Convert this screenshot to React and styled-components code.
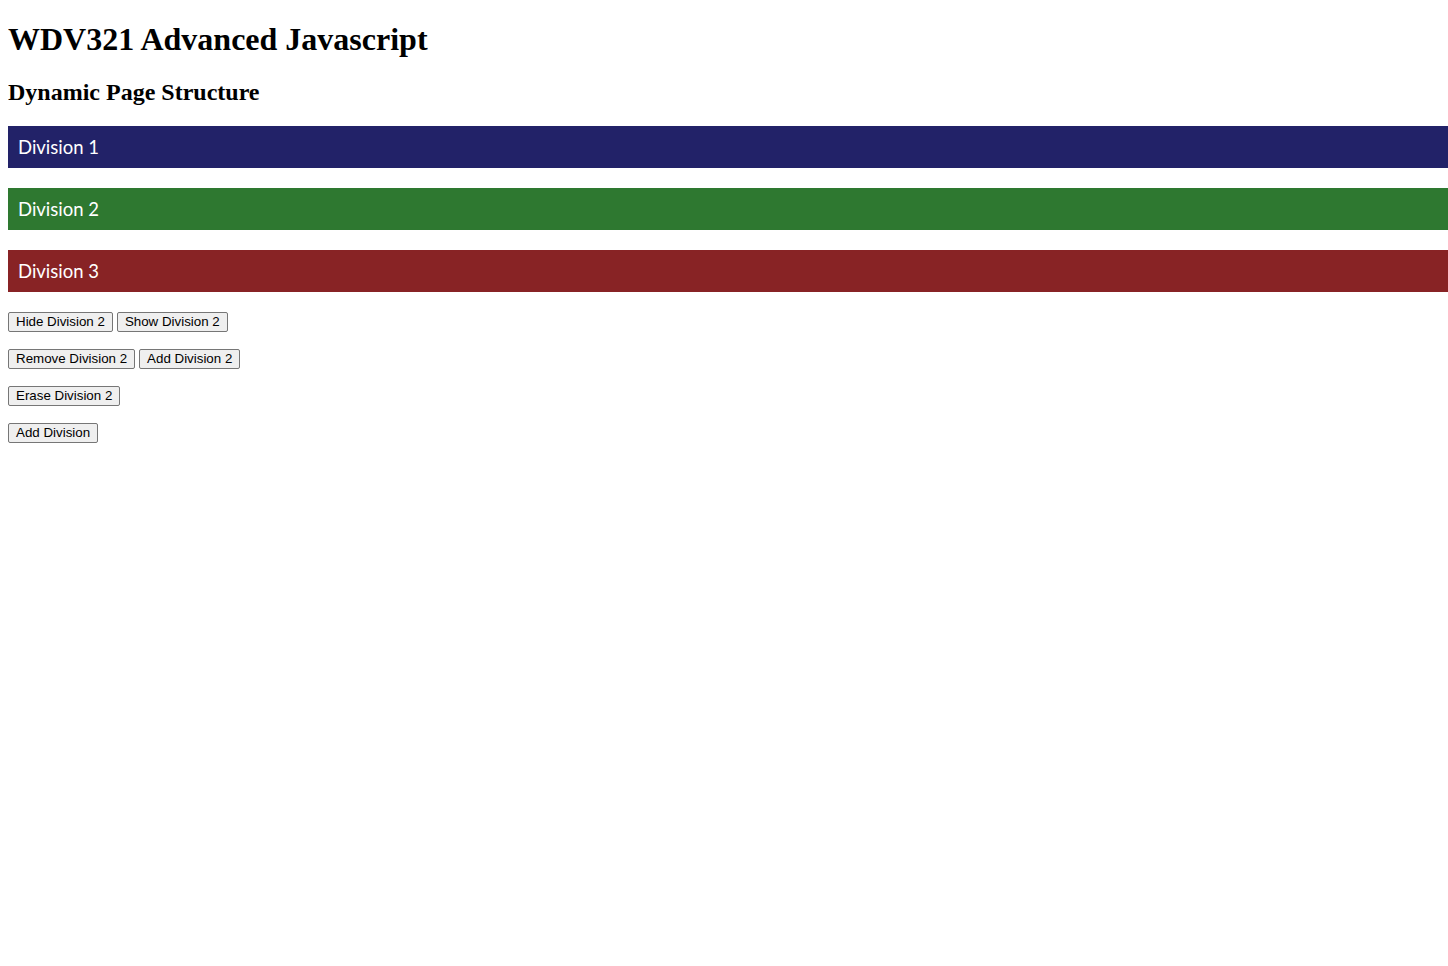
import React, { useState } from "react";
import styled, { createGlobalStyle } from "styled-components";

const GlobalStyle = createGlobalStyle`
  body {
    margin: 8px 0 8px 8px;
    background: #fff;
    color: #000;
    font-family: "Liberation Serif", "Times New Roman", serif;
  }
`;

const Title = styled.h1`
  font-family: "Liberation Serif", "Times New Roman", serif;
  font-size: 32px;
  font-weight: 700;
  margin: 12.5px 0 21.44px;
`;

const Subtitle = styled.h2`
  font-family: "Liberation Serif", "Times New Roman", serif;
  font-size: 24px;
  font-weight: 700;
  margin: 19.92px 0;
`;

const Division = styled.div`
  box-sizing: border-box;
  height: 42px;
  margin: 0 0 20px 0;
  padding: 0 10px;
  display: flex;
  align-items: center;
  background: ${(props) => props.$color};
  color: #fff;
  font-family: Lato, "Open Sans", sans-serif;
  font-size: 18.5px;
`;

const ButtonRow = styled.p`
  margin: 16px 0;
  height: 21px;
  display: flex;
  align-items: flex-start;
  gap: 4px;
  font-family: "Liberation Sans", Arial, sans-serif;
`;

const Button = styled.button`
  box-sizing: border-box;
  height: 20px;
  font-family: "Liberation Sans", Arial, sans-serif;
  font-size: 13.33px;
  padding: 0 7px;
  margin: 0;
  border: 1px solid #767676;
  border-radius: 2px;
  background: #efefef;
  color: #000;
  cursor: pointer;
  &:hover {
    background: #e5e5e5;
  }
`;

const COLORS = ["#222268", "#2e7830", "#882325", "#555555"];

export default function App() {
  const [divs, setDivs] = useState([
    { id: 1, text: "Division 1", color: COLORS[0], hidden: false },
    { id: 2, text: "Division 2", color: COLORS[1], hidden: false },
    { id: 3, text: "Division 3", color: COLORS[2], hidden: false },
  ]);

  const update = (id, patch) =>
    setDivs((prev) => prev.map((d) => (d.id === id ? { ...d, ...patch } : d)));

  const addDivision2 = () => {
    if (divs.some((d) => d.id === 2)) return;
    const next = [...divs];
    next.splice(1, 0, { id: 2, text: "Division 2", color: COLORS[1], hidden: false });
    setDivs(next);
  };

  const addDivision = () => {
    const id = Math.max(0, ...divs.map((d) => d.id)) + 1;
    setDivs([
      ...divs,
      { id, text: "Division " + id, color: COLORS[(id - 1) % COLORS.length], hidden: false },
    ]);
  };

  return (
    <>
      <GlobalStyle />
      <Title>WDV321 Advanced Javascript</Title>
      <Subtitle>Dynamic Page Structure</Subtitle>
      {divs
        .filter((d) => !d.hidden)
        .map((d) => (
          <Division key={d.id} $color={d.color}>
            {d.text}
          </Division>
        ))}
      <ButtonRow>
        <Button onClick={() => update(2, { hidden: true })}>Hide Division 2</Button>
        <Button onClick={() => update(2, { hidden: false })}>Show Division 2</Button>
      </ButtonRow>
      <ButtonRow>
        <Button onClick={() => setDivs(divs.filter((d) => d.id !== 2))}>
          Remove Division 2
        </Button>
        <Button onClick={addDivision2}>Add Division 2</Button>
      </ButtonRow>
      <ButtonRow>
        <Button onClick={() => update(2, { text: "" })}>Erase Division 2</Button>
      </ButtonRow>
      <ButtonRow>
        <Button onClick={addDivision}>Add Division</Button>
      </ButtonRow>
    </>
  );
}
